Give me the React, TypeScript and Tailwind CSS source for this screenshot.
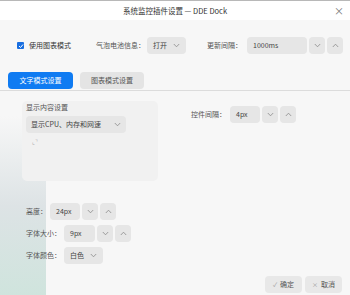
import React from "react";

const font = { fontFamily: '"Noto Sans CJK SC", "Noto Sans", sans-serif' };

function Chev({ up = false }: { up?: boolean }) {
  return (
    <svg width="7" height="5" viewBox="0 0 7 5" fill="none" className="shrink-0">
      <path d={up ? "M0.8 4 L3.5 1.2 L6.2 4" : "M0.8 1 L3.5 3.8 L6.2 1"} stroke="#8a8a8a" strokeWidth="0.8" />
    </svg>
  );
}

function Spin({ w, text }: { w: string; text: string }) {
  return (
    <div className="flex items-center gap-[2px] shrink-0">
      <div className={`${w} h-[17px] rounded-[4px] bg-[#e6e6e6] flex items-center pl-[6px] text-[#444]`}>{text}</div>
      <div className="w-[16px] h-[17px] rounded-[4px] bg-[#e6e6e6] flex items-center justify-center"><Chev /></div>
      <div className="w-[16px] h-[17px] rounded-[4px] bg-[#e6e6e6] flex items-center justify-center"><Chev up /></div>
    </div>
  );
}

export default function App() {
  return (
    <div style={font} className="relative w-[350px] h-[295px] bg-[#f7f7f7] overflow-hidden text-[7px] text-[#555] whitespace-nowrap border-t border-[#b8b8b8]">
      <div className="absolute left-0 top-[115px] w-[46px] h-[180px] bg-gradient-to-b from-[#f7f7f7] via-[#dde3e5] to-[#cfe4dd]" />
      <div className="relative h-[19px] bg-white flex items-center justify-center text-[7.5px] text-[#333]">
        系统监控插件设置 — DDE Dock
        <span className="absolute right-[6px] top-[2px] text-[10px] text-[#777]">×</span>
      </div>
      <div className="relative flex items-center mt-[17px] h-[17px]">
        <div className="ml-[17px] w-[7px] h-[7px] rounded-[1px] bg-[#1a6fe0] flex items-center justify-center shrink-0">
          <svg width="6" height="6" viewBox="0 0 6 6"><path d="M1 3 L2.5 4.5 L5 1.5" stroke="white" strokeWidth="1" fill="none" /></svg>
        </div>
        <span className="ml-[5px] text-[#333]">使用图表模式</span>
        <span className="ml-[25px]">气泡电池信息：</span>
        <div className="ml-[2px] w-[39px] h-[17px] rounded-[4px] bg-[#e6e6e6] flex items-center justify-between px-[6px] text-[#444] shrink-0">
          打开<Chev />
        </div>
        <span className="ml-[21px]">更新间隔：</span>
        <div className="ml-[5px]"><Spin w="w-[60px]" text="1000ms" /></div>
      </div>
      <div className="relative flex items-center gap-[7px] mt-[18px] ml-[8px] h-[17px]">
        <div className="w-[65px] h-[17px] rounded-[4px] bg-[#0f7bf2] text-white flex items-center justify-center">文字模式设置</div>
        <div className="w-[64px] h-[17px] rounded-[4px] bg-[#e4e4e4] text-[#555] flex items-center justify-center">图表模式设置</div>
      </div>
      <div className="relative h-px bg-[#dcdcdc] mt-[1px]" />
      <div className="relative flex mt-[10px]">
        <div className="ml-[22px] w-[136px] h-[80px] rounded-[5px] bg-[#f1f1f1] px-[4px] pt-[1px] shrink-0">
          <div className="leading-[10px]">显示内容设置</div>
          <div className="mt-[4px] w-[100px] h-[17px] rounded-[4px] bg-[#e6e6e6] flex items-center justify-between px-[5px] text-[#444]">
            显示CPU、内存和网速<Chev />
          </div>
          <div className="mt-[4px] ml-[6px] text-[6px] text-[#aaa]">⌞⌝</div>
        </div>
        <div className="flex items-center h-[17px] mt-[5px] ml-[33px]">
          <span>控件间隔：</span>
          <div className="ml-[4px]"><Spin w="w-[30px]" text="4px" /></div>
        </div>
      </div>
      <div className="relative ml-[26px] mt-[22px] flex flex-col gap-[5px]">
        <div className="flex items-center h-[17px]">
          <span className="w-[24px]">高度：</span>
          <Spin w="w-[30px]" text="24px" />
        </div>
        <div className="flex items-center h-[17px]">
          <span className="w-[38px]">字体大小：</span>
          <Spin w="w-[31px]" text="9px" />
        </div>
        <div className="flex items-center h-[17px]">
          <span className="w-[38px]">字体颜色：</span>
          <div className="w-[39px] h-[17px] rounded-[4px] bg-[#e6e6e6] flex items-center justify-between px-[6px] text-[#444]">白色<Chev /></div>
        </div>
      </div>
      <div className="absolute right-[8px] bottom-[2px] flex gap-[3px]">
        <div className="w-[37px] h-[17px] rounded-[4px] bg-[#e8e8e8] flex items-center justify-center gap-[3px] text-[#555]"><span className="text-[6px] text-[#999]">✓</span>确定</div>
        <div className="w-[37px] h-[17px] rounded-[4px] bg-[#e8e8e8] flex items-center justify-center gap-[3px] text-[#555]"><span className="text-[6px] text-[#999]">×</span>取消</div>
      </div>
    </div>
  );
}
